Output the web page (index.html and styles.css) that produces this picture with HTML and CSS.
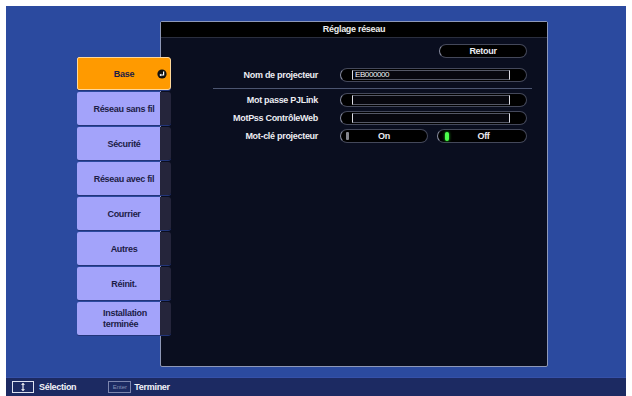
FILE: index.html
```html
<!DOCTYPE html>
<html lang="fr">
<head>
    <meta charset="UTF-8">
    <title>Réglage réseau</title>
    <link rel="stylesheet" href="styles.css">
</head>
<body>
    <div class="screen">
        <div class="main">
            <ul class="menu">
                <li class="item active">Base
                    <svg class="enter" width="10" height="10" viewBox="0 0 10 10">
                        <circle cx="5" cy="5" r="4.6" fill="#111"/>
                        <path d="M6.6 2.4 V6 H3.6" fill="none" stroke="#fff" stroke-width="1.2"/>
                        <path d="M2.4 6 L4.2 4.6 V7.4 Z" fill="#fff"/>
                    </svg>
                </li>
                <li class="item">Réseau sans fil</li>
                <li class="item">Sécurité</li>
                <li class="item">Réseau avec fil</li>
                <li class="item">Courrier</li>
                <li class="item">Autres</li>
                <li class="item">Réinit.</li>
                <li class="item"><span class="two">Installation<br>terminée</span></li>
            </ul>

            <div class="panel">
                <div class="title">Réglage réseau</div>
                <div class="body">
                    <div class="back"><span class="pill btn">Retour</span></div>

                    <div class="row">
                        <span class="label">Nom de projecteur</span>
                        <span class="pill field"><span class="input">EB000000</span></span>
                    </div>

                    <div class="sep"></div>

                    <div class="row">
                        <span class="label">Mot passe PJLink</span>
                        <span class="pill field"><span class="input"></span></span>
                    </div>
                    <div class="row">
                        <span class="label">MotPss ContrôleWeb</span>
                        <span class="pill field"><span class="input"></span></span>
                    </div>
                    <div class="row">
                        <span class="label">Mot-clé projecteur</span>
                        <span class="pill toggle"><span class="led"></span><span class="val">On</span></span>
                        <span class="pill toggle wide"><span class="led on"></span><span class="val">Off</span></span>
                    </div>
                </div>
            </div>
        </div>

        <div class="footer">
            <span class="key">
                <svg width="22" height="12" viewBox="0 0 22 12">
                    <path d="M11 3 V9" stroke="#fff" stroke-width="1.2"/>
                    <path d="M8.8 3.6 L11 1.2 L13.2 3.6 Z M8.8 8.4 L11 10.8 L13.2 8.4 Z" fill="#fff"/>
                </svg>
            </span>
            <span class="hint">Sélection</span>
            <span class="key dim">Enter</span>
            <span class="hint">Terminer</span>
        </div>
    </div>
</body>
</html>
```

FILE: styles.css
```css
body { margin: 0; background: #fff; font-family: "Liberation Sans", Arial, sans-serif; font-weight: bold; font-size: 9px; letter-spacing: -0.3px; }
.screen { margin: 6px 6px 0 6px; height: 390px; background: #2b4a9f; display: flex; flex-direction: column; }

.main { flex: 1; display: flex; align-items: flex-start; padding: 15px 0 0 71px; }
.menu { list-style: none; margin: 36px 0 0 0; padding: 0; width: 94px; position: relative; z-index: 1; }
.item { position: relative; height: 33px; margin-bottom: 2px; display: flex; align-items: center; justify-content: center; color: #1c1c46; border-radius: 2px 3px 3px 2px; background: linear-gradient(to right, #a3a3fa 83px, #25253b 83px); box-shadow: 0 1px 0 #22357a; }
.item.active { background: #ff9a00; border: 1px solid #ffd89a; box-sizing: border-box; height: 33px; }
.item .two { display: inline-block; text-align: left; line-height: 11px; margin-left: 2px; }
.enter { position: absolute; right: 3px; top: 11px; }

.panel { margin-left: -11px; width: 388px; height: 346px; box-sizing: border-box; background: #0a0e1f; border: 1px solid #8e98b8; border-radius: 2px; }
.title { height: 15px; line-height: 15px; background: #000; color: #eee; text-align: center; border-bottom: 1px solid #2a2e3e; }
.body { padding-top: 6px; color: #ececf2; }
.back { display: flex; justify-content: flex-end; padding-right: 20px; }

.pill { display: flex; align-items: center; height: 14px; box-sizing: border-box; background: #000; border: 1px solid #44485a; border-left-color: #8a8ea2; border-radius: 7px; }
.btn { width: 88px; justify-content: center; }

.row { display: flex; align-items: center; height: 14px; margin-bottom: 4px; }
.back + .row { margin-top: 10px; margin-bottom: 0; }
.label { width: 157px; text-align: right; margin-right: 22px; }
.field { width: 187px; }
.input { width: 158px; height: 10px; margin-left: 11px; box-sizing: border-box; background: #07070e; border: 1px solid #555866; border-left-color: #dcdce4; border-right-color: #dcdce4; font-weight: normal; font-size: 8px; line-height: 8px; letter-spacing: -0.4px; padding-left: 2px; color: #f4f4f4; }

.sep { height: 1px; background: #4c5570; margin: 6px 15px 4px 52px; }

.toggle { width: 88px; }
.toggle.wide { width: 90px; margin-left: 9px; }
.led { width: 3px; height: 8px; margin-left: 5px; background: #85868e; border-radius: 1px; }
.led.on { width: 4px; height: 9px; margin-left: 7px; background: #4cff4c; border-radius: 2px; box-shadow: 0 0 3px #22cc22; }
.val { flex: 1; text-align: center; padding-right: 8px; }

.footer { height: 19px; box-sizing: border-box; background: #1c2a62; border-top: 1px solid #3550a8; display: flex; align-items: center; padding-left: 6px; color: #f2f2f8; }
.key { display: flex; align-items: center; justify-content: center; width: 22px; height: 12px; box-sizing: border-box; border: 1px solid #dde2f0; }
.key.dim { width: 23px; border-color: #7d86ae; color: #8790b6; font-size: 6px; font-weight: normal; letter-spacing: 0; margin-left: 32px; }
.hint { margin-left: 5px; }
.key.dim + .hint { margin-left: 3px; }
```
